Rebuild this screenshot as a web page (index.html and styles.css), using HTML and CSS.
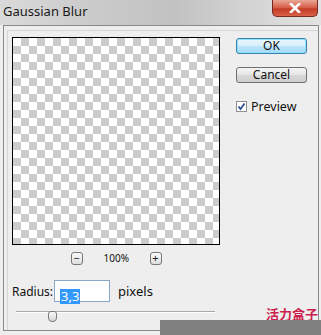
FILE: index.html
```html
<!DOCTYPE html>
<html lang="en">
<head>
    <meta charset="UTF-8">
    <title>Gaussian Blur</title>
    <link rel="stylesheet" href="styles.css">
</head>
<body>
    <div class="titlebar">
        <span class="title">Gaussian Blur</span>
        <span class="close">
            <svg width="12" height="10" viewBox="0 0 12 10"><path d="M2 1 L10 9 M10 1 L2 9" stroke="#fff" stroke-width="2.6" stroke-linecap="square"/></svg>
        </span>
    </div>
    <div class="frame">
        <div class="inner">
            <div class="left">
                <div class="preview"></div>
                <div class="zoom-row">
                    <span class="zoom-btn">&minus;</span>
                    <span class="zoom-text">100%</span>
                    <span class="zoom-btn">+</span>
                </div>
                <div class="radius-row">
                    <label class="label">Radius:</label>
                    <div class="field"><span class="sel">3,3</span></div>
                    <span class="unit">pixels</span>
                </div>
                <div class="slider">
                    <div class="track"></div>
                    <div class="thumb"></div>
                </div>
            </div>
            <div class="right">
                <div class="btn btn-ok">OK</div>
                <div class="btn">Cancel</div>
                <div class="check-row">
                    <span class="check">
                        <svg width="9" height="9" viewBox="0 0 9 9"><path d="M1.5 4.5 L3.5 7 L7.5 1.5" fill="none" stroke="#2a4f94" stroke-width="1.8"/></svg>
                    </span>
                    <span>Preview</span>
                </div>
            </div>
        </div>
    </div>
    <div class="watermark">活力盒子</div>
    <div class="cover"></div>
</body>
</html>
```
FILE: styles.css
```css
body {
    margin: 0;
    width: 321px;
    height: 335px;
    overflow: hidden;
    position: relative;
    background-color: #eeeeee;
    font-family: "Noto Sans", "Liberation Sans", sans-serif;
    color: #111;
}
.titlebar {
    height: 25px;
    display: flex;
    align-items: flex-start;
    background: linear-gradient(to right, #dadada, #cacaca 30%, #c2c2c2 55%, #d2d2d2 75%, #e2e2e2);
}
.title {
    margin: 2px 0 0 3px;
    font-size: 13px;
    color: #1a1a1a;
}
.close {
    margin-left: auto;
    margin-right: 3px;
    width: 46px;
    height: 17px;
    box-sizing: border-box;
    border: 1px solid #7a2a20;
    border-top: none;
    border-radius: 0 0 5px 5px;
    background: linear-gradient(#eaa796, #d55a44 50%, #c23a24 55%, #d8624a);
    display: flex;
    align-items: center;
    justify-content: center;
}
.frame {
    margin: 0 2px 0 3px;
    height: 306px;
    box-sizing: border-box;
    border: 1px solid #8a8a8a;
    padding: 4px 0 0 3px;
}
.inner {
    height: 100%;
    box-sizing: border-box;
    border-top: 1px solid #d6d6d6;
    border-left: 1px solid #d6d6d6;
    padding: 6px 0 0 4px;
    display: grid;
    grid-template-columns: 208px 71px;
    column-gap: 16px;
}
.preview {
    width: 208px;
    height: 208px;
    box-sizing: border-box;
    border: 1px solid #000;
    background: conic-gradient(#cccccc 25%, #ffffff 0 50%, #cccccc 0 75%, #ffffff 0);
    background-size: 16px 16px;
}
.zoom-row {
    margin-top: 7px;
    height: 12px;
    display: flex;
    justify-content: center;
    align-items: center;
    gap: 21px;
}
.zoom-btn {
    width: 12px;
    height: 13px;
    box-sizing: border-box;
    border: 1px solid #777;
    border-radius: 3px;
    background: linear-gradient(#fafafa, #dedede);
    font-size: 11px;
    line-height: 10px;
    text-align: center;
    color: #222;
}
.zoom-text {
    font-size: 10px;
    width: 25px;
    text-align: center;
}
.radius-row {
    margin-top: 16px;
    height: 22px;
    display: flex;
    align-items: center;
}
.label {
    flex: none;
    width: 42px;
    white-space: nowrap;
    font-size: 12px;
}
.field {
    flex: none;
    width: 56px;
    height: 22px;
    box-sizing: border-box;
    border: 1px solid #8aa6c8;
    background: #fff;
    padding: 3px 0 0 5px;
}
.sel {
    background: #3399ff;
    color: #fff;
    font-size: 13px;
    line-height: 15px;
    display: inline-block;
    padding: 0 1px;
}
.unit {
    margin-left: 8px;
    font-size: 13px;
}
.slider {
    position: relative;
    margin: 9px 0 0 4px;
    width: 199px;
    height: 11px;
}
.track {
    margin-top: 5px;
    height: 1px;
    background: #a8a8a8;
    border-bottom: 1px solid #fff;
}
.thumb {
    position: absolute;
    left: 32px;
    top: 0;
    width: 9px;
    height: 11px;
    box-sizing: border-box;
    border: 1px solid #7a7a7a;
    border-radius: 3px 3px 4px 4px;
    background: linear-gradient(#fafafa, #d4d4d4);
}
.right {
    padding-top: 1px;
    display: flex;
    flex-direction: column;
}
.btn {
    height: 16px;
    box-sizing: border-box;
    border: 1px solid #707070;
    border-radius: 3px;
    background: linear-gradient(#f4f4f4, #e6e6e6 50%, #d8d8d8 51%, #cfcfcf);
    font-size: 12px;
    line-height: 14px;
    text-align: center;
    margin-bottom: 13px;
}
.btn-ok {
    border-color: #3c7fb1;
    box-shadow: inset 0 0 0 1px #8ee0fb;
    background: linear-gradient(#eaf6fd, #d9f0fc 50%, #bee6fd 51%, #a7d9f5);
}
.check-row {
    margin-top: 2px;
    display: flex;
    align-items: center;
    gap: 4px;
    font-size: 12.5px;
}
.check {
    width: 11px;
    height: 11px;
    box-sizing: border-box;
    border: 1px solid #8e8f8f;
    background: #fff;
    display: flex;
}
.watermark {
    position: absolute;
    left: 266px;
    top: 304px;
    font-family: "Noto Sans CJK SC", sans-serif;
    font-weight: bold;
    font-size: 13px;
    color: #cc1f4f;
}
.cover {
    position: absolute;
    left: 160px;
    top: 320px;
    width: 161px;
    height: 15px;
    background: #808080;
}
```
